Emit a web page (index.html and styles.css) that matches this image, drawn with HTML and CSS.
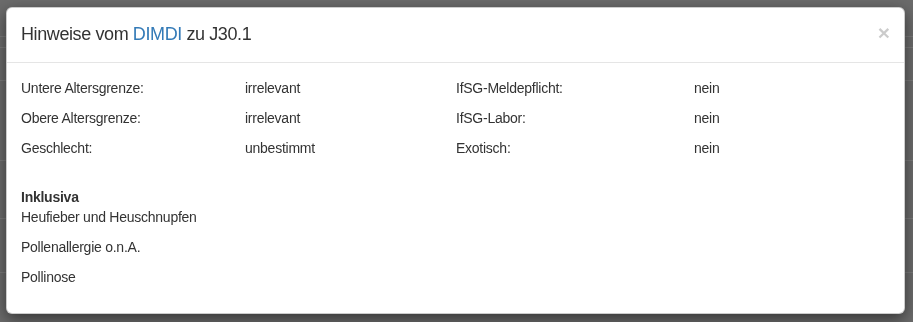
FILE: index.html
```html
<!DOCTYPE html>
<html lang="de">
<head>
    <meta charset="UTF-8">
    <title>Hinweise vom DIMDI zu J30.1</title>
    <link rel="stylesheet" href="styles.css">
</head>
<body>

    <div class="page">
        <div class="page-line l1"></div>
        <div class="page-line l2"></div>
        <div class="page-line l3"></div>
        <div class="page-line l4"></div>
        <div class="page-line l5"></div>
        <div class="page-line l6"></div>
    </div>

    <div class="modal">
        <div class="modal-header">
            <h4 class="modal-title">Hinweise vom <a href="#">DIMDI</a> zu J30.1</h4>
            <button class="close" type="button">&times;</button>
        </div>
        <div class="modal-body">
            <div class="info">
                <div>Untere Altersgrenze:</div>
                <div>irrelevant</div>
                <div>IfSG-Meldepflicht:</div>
                <div>nein</div>

                <div>Obere Altersgrenze:</div>
                <div>irrelevant</div>
                <div>IfSG-Labor:</div>
                <div>nein</div>

                <div>Geschlecht:</div>
                <div>unbestimmt</div>
                <div>Exotisch:</div>
                <div>nein</div>
            </div>

            <div class="notes">
                <strong>Inklusiva</strong>
                <p>Heufieber und Heuschnupfen</p>
                <p>Pollenallergie o.n.A.</p>
                <p>Pollinose</p>
            </div>
        </div>
    </div>

</body>
</html>
```

FILE: styles.css
```css
html, body {
    margin: 0;
    height: 100%;
}

body {
    font-family: "Liberation Sans", Arial, sans-serif;
    font-size: 14px;
    line-height: 1.42857;
    letter-spacing: -0.25px;
    color: #333;
    background: #6b6b6b;
    padding: 7px 8px 0 6px;
    box-sizing: border-box;
    overflow: hidden;
}

.page {
    position: fixed;
    inset: 0;
}

.page-line {
    position: absolute;
    left: 0;
    right: 0;
    height: 1px;
    background: #7a7a7a;
}

.l1 { top: 36px; }
.l2 { top: 47px; }
.l3 { top: 80px; }
.l4 { top: 160px; }
.l5 { top: 218px; }
.l6 { top: 272px; }

.modal {
    position: relative;
    background: #fff;
    border: 1px solid rgba(0, 0, 0, 0.2);
    border-radius: 6px;
    box-shadow: 0 5px 15px rgba(0, 0, 0, 0.5);
    height: 307px;
    box-sizing: border-box;
}

.modal-header {
    display: flex;
    align-items: center;
    justify-content: space-between;
    padding: 14px 14px;
    border-bottom: 1px solid #e5e5e5;
}

.modal-title {
    margin: 0;
    font-size: 18px;
    font-weight: normal;
    line-height: 1.42857;
    letter-spacing: -0.4px;
}

.modal-title a {
    color: #337ab7;
    text-decoration: none;
}

.close {
    background: none;
    border: none;
    padding: 0;
    margin-top: -4px;
    font-family: inherit;
    font-size: 21px;
    font-weight: bold;
    line-height: 1;
    color: #000;
    opacity: 0.2;
    cursor: pointer;
}

.modal-body {
    padding: 16px 14px 14px;
}

.info {
    display: grid;
    grid-template-columns: 224px 211px 238px 1fr;
    grid-auto-rows: 30px;
}

.notes {
    margin-top: 19px;
}

.notes strong {
    display: block;
}

.notes p {
    margin: 0 0 10px;
}
```
